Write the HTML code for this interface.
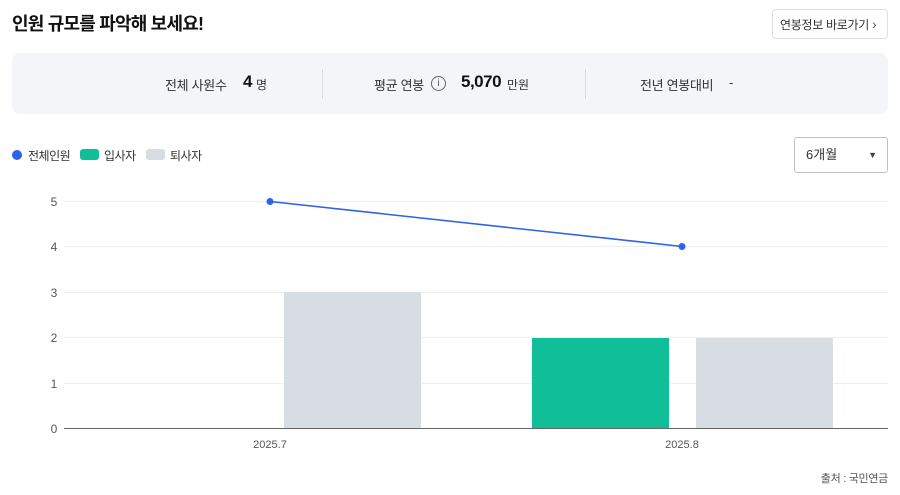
<!DOCTYPE html>
<html><head><meta charset="utf-8"><style>
body{margin:0;width:900px;height:495px;background:#fff;font-family:"Liberation Sans","Noto Sans CJK KR",sans-serif;color:#222;position:relative;overflow:hidden}
.a{position:absolute;white-space:nowrap}
</style></head><body>
<div class="a" style="left:12px;top:10px;font-size:18px;font-weight:bold;color:#111;letter-spacing:-0.8px">인원 규모를 파악해 보세요!</div>
<div class="a" style="left:772px;top:9px;width:114px;height:28px;border:1px solid #dcdfe4;border-radius:4px;font-size:12px;line-height:28px;color:#333;text-indent:7px;letter-spacing:-0.3px">연봉정보 바로가기 <span style="font-size:14px;color:#555">›</span></div>
<div class="a" style="left:12px;top:53px;width:876px;height:61px;background:#f4f5f8;border-radius:8px"></div>
<div class="a" style="left:322px;top:69px;width:1px;height:30px;background:#d8dbe0"></div>
<div class="a" style="left:585px;top:69px;width:1px;height:30px;background:#d8dbe0"></div>
<div class="a" style="left:165px;top:75px;font-size:13px;color:#333;letter-spacing:-0.3px">전체 사원수</div>
<div class="a" style="left:243px;top:72px;font-size:17px;font-weight:bold;color:#111">4</div>
<div class="a" style="left:256px;top:76px;font-size:12px;color:#333">명</div>
<div class="a" style="left:374px;top:75px;font-size:13px;color:#333;letter-spacing:-0.3px">평균 연봉</div>
<div class="a" style="left:431px;top:76px;width:13px;height:13px;border:1px solid #666;border-radius:50%;font-size:10px;line-height:13px;text-align:center;color:#555">i</div>
<div class="a" style="left:461px;top:72px;font-size:17px;font-weight:bold;color:#111;letter-spacing:-0.5px">5,070</div>
<div class="a" style="left:507px;top:76px;font-size:12px;color:#333">만원</div>
<div class="a" style="left:640px;top:75px;font-size:13px;color:#333;letter-spacing:-0.3px">전년 연봉대비</div>
<div class="a" style="left:729px;top:75px;font-size:13px;color:#333">-</div>
<div class="a" style="left:12px;top:150px;width:10px;height:10px;border-radius:50%;background:#2d63e8"></div>
<div class="a" style="left:28px;top:147px;font-size:12px;color:#333;letter-spacing:-0.5px">전체인원</div>
<div class="a" style="left:80px;top:149px;width:19px;height:11px;border-radius:3px;background:#10bf98"></div>
<div class="a" style="left:104px;top:147px;font-size:12px;color:#333;letter-spacing:-0.5px">입사자</div>
<div class="a" style="left:146px;top:149px;width:19px;height:11px;border-radius:3px;background:#d8dce3"></div>
<div class="a" style="left:170px;top:147px;font-size:12px;color:#333;letter-spacing:-0.5px">퇴사자</div>
<div class="a" style="left:794px;top:137px;width:92px;height:34px;border:1px solid #bfc3c9;border-radius:3px;font-size:13px;line-height:34px;text-indent:11px;color:#333">6개월<span style="position:absolute;right:10px;font-size:9px;color:#444">▼</span></div>
<svg class="a" style="left:0;top:0" width="900" height="495">
<g stroke="#eceef2" stroke-width="1">
<line x1="64" y1="201.5" x2="888" y2="201.5"/><line x1="64" y1="246.5" x2="888" y2="246.5"/><line x1="64" y1="292.5" x2="888" y2="292.5"/><line x1="64" y1="337.5" x2="888" y2="337.5"/><line x1="64" y1="383.5" x2="888" y2="383.5"/></g>
<rect x="284" y="292" width="137" height="136" fill="#d8dce3"/>
<rect x="532" y="338" width="137" height="90" fill="#10bf98"/>
<rect x="696" y="338" width="137" height="90" fill="#d8dce3"/>
<line x1="64" y1="428.5" x2="888" y2="428.5" stroke="#666" stroke-width="1"/>
<line x1="270" y1="201.5" x2="682" y2="246.5" stroke="#2d63e8" stroke-width="1.6"/>
<circle cx="270" cy="201.5" r="3.5" fill="#2d63e8"/><circle cx="682" cy="246.5" r="3.5" fill="#2d63e8"/>
<g font-size="12" fill="#555" font-family="Liberation Sans,sans-serif" text-anchor="middle">
<text x="54" y="206">5</text><text x="54" y="251">4</text><text x="54" y="297">3</text><text x="54" y="342">2</text><text x="54" y="388">1</text><text x="54" y="433">0</text>
<text x="270" y="448" font-size="11">2025.7</text><text x="682" y="448" font-size="11">2025.8</text></g>
</svg>
<div class="a" style="right:12px;top:470px;font-size:11px;color:#555;letter-spacing:-0.3px">출처 : 국민연금</div>
</body></html>
